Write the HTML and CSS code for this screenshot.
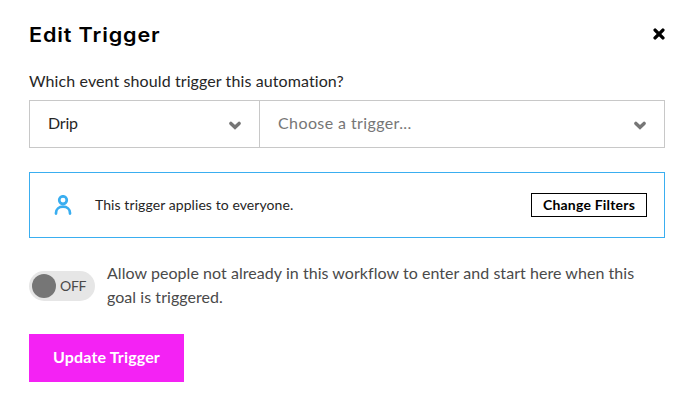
FILE: index.html
```html
<!DOCTYPE html>
<html lang="en">
  <head>
    <meta charset="UTF-8" />
    <meta name="viewport" content="width=device-width, initial-scale=1.0" />
    <title>Edit Trigger</title>
    <link rel="stylesheet" href="styles.css">
  </head>

  <body>
    <div class="modal">
      <div class="header">
        <h2>Edit Trigger</h2>
        <button class="close" aria-label="Close">
          <svg width="12" height="12" viewBox="0 0 12 12">
            <path d="M2.1 2.1 L9.9 9.9 M9.9 2.1 L2.1 9.9" />
          </svg>
        </button>
      </div>

      <p class="question">Which event should trigger this automation?</p>

      <div class="selects">
        <div class="select provider">
          <span class="value">Drip</span>
          <svg class="chevron" width="12" height="9" viewBox="0 0 12 9">
            <path d="M1.9 2.4 L6 6.3 L10.1 2.4" />
          </svg>
        </div>
        <div class="select event">
          <span class="value">Choose a trigger...</span>
          <svg class="chevron" width="12" height="9" viewBox="0 0 12 9">
            <path d="M1.9 2.4 L6 6.3 L10.1 2.4" />
          </svg>
        </div>
      </div>

      <div class="filters">
        <svg class="person" width="18" height="20" viewBox="0 0 18 20">
          <circle cx="9" cy="5.1" r="3.8" />
          <path d="M2 18.6 V18 C2 14.2 5 11.7 9 11.7 C13 11.7 16 14.2 16 18 V18.6" />
        </svg>
        <p>This trigger applies to everyone.</p>
        <button class="change">Change Filters</button>
      </div>

      <div class="allow">
        <div class="toggle">
          <span class="knob"></span>
          <span class="state">OFF</span>
        </div>
        <p>
          Allow people not already in this workflow to enter and start here when this<br />
          goal is triggered.
        </p>
      </div>

      <button class="update">Update Trigger</button>
    </div>
  </body>
</html>
```
FILE: styles.css
```css
* {
  margin: 0;
  padding: 0;
  box-sizing: border-box;
}

body {
  background-color: white;
  color: #262626;
  font-family: Lato, "Liberation Sans", sans-serif;
  font-size: 16px;
  line-height: 24px;
  font-variant-ligatures: none;
}

button {
  font-family: inherit;
  border: none;
  background-color: transparent;
}

svg {
  display: block;
  fill: none;
}

.modal {
  width: 694px;
  padding: 20px 29px 0;
}

.header {
  display: flex;
  justify-content: space-between;
  height: 49px;
}

h2 {
  font-family: Inter, sans-serif;
  font-size: 20px;
  font-weight: 600;
  line-height: 30px;
  letter-spacing: 0.8px;
  color: black;
  transform: scaleX(1.08);
  transform-origin: left;
}

.close {
  width: 12px;
  height: 12px;
  margin-top: 8px;
}

.close path {
  stroke: black;
  stroke-width: 3.4;
  stroke-linecap: round;
}

.question {
  height: 31px;
  letter-spacing: 0.1px;
}

.selects {
  display: flex;
  height: 48px;
  border: 1px solid #c8c8c8;
}

.select {
  display: flex;
  align-items: center;
  justify-content: space-between;
  padding: 0 18px;
}

.value {
  padding-bottom: 2px;
}

.provider {
  width: 230px;
  border-right: 1px solid #c8c8c8;
}

.provider .value {
  letter-spacing: -0.2px;
}

.event {
  flex: 1;
  color: #767676;
}

.event .value {
  letter-spacing: 0.4px;
}

.chevron {
  margin-top: 2px;
}

.chevron path {
  stroke: #767676;
  stroke-width: 3.4;
  stroke-linecap: round;
}

.filters {
  display: flex;
  align-items: center;
  height: 66px;
  margin-top: 24px;
  padding: 0 17px 0 24px;
  border: 1px solid #3aaef0;
  font-size: 14px;
  letter-spacing: 0.08px;
}

.person {
  margin-right: 23px;
}

.person circle,
.person path {
  stroke: #3aaef0;
  stroke-width: 2.7;
  stroke-linecap: round;
}

.change {
  width: 116px;
  height: 24px;
  margin-left: auto;
  border: 1px solid black;
  font-size: 14px;
  font-weight: 700;
  line-height: 22px;
  letter-spacing: 0.2px;
  color: black;
}

.allow {
  display: flex;
  align-items: center;
  gap: 12px;
  margin-top: 24px;
  color: #4a4a4a;
}

.allow p {
  margin: -1px 0 1px;
  letter-spacing: 0.05px;
  white-space: nowrap;
}

.toggle {
  display: flex;
  align-items: center;
  gap: 4px;
  width: 66px;
  height: 30px;
  padding-left: 3px;
  border-radius: 15px;
  background-color: #e6e6e6;
  font-size: 14px;
  letter-spacing: -0.3px;
}

.knob {
  width: 24px;
  height: 24px;
  border-radius: 50%;
  background-color: #767676;
}

.update {
  width: 155px;
  height: 48px;
  margin-top: 24px;
  padding-bottom: 3px;
  background-color: #f422f4;
  color: white;
  font-size: 16px;
  font-weight: 700;
  letter-spacing: 0.15px;
}
```
